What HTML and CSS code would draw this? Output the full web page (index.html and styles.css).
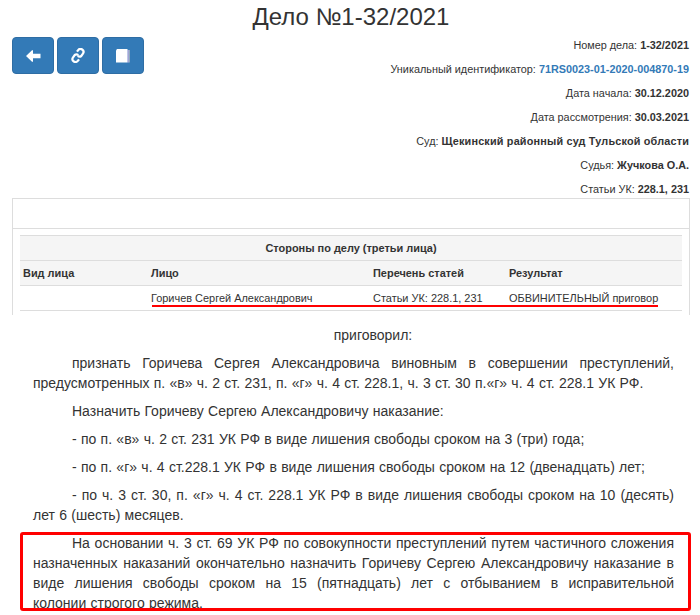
FILE: index.html
```html
<!DOCTYPE html>
<html lang="ru">
<head>
<meta charset="utf-8">
<title>Дело №1-32/2021</title>
<link rel="stylesheet" href="styles.css">
</head>
<body>
<div class="case">
  <h1 class="title">Дело №1-32/2021</h1>
  <div class="head">
    <div class="buttons">
      <a class="btn"><svg width="15" height="12" viewBox="0 0 15 12"><path d="M0 6 6 0.2 7 0.2 7 3.800 14.500 3.800 14.500 8.200 7 8.200 7 11.800 6 11.800Z" fill="#fff"/></svg></a>
      <a class="btn"><svg width="14" height="15" viewBox="0 0 14 15" fill="none" stroke="#fff" stroke-width="2.200"><g transform="rotate(35 7 7.500)"><path d="M4 5V3.200a3 3 0 0 1 6 0V6a3 3 0 0 1-3 2"/><path d="M10 10v1.800a3 3 0 0 1-6 0V9a3 3 0 0 1 3-2"/></g></svg></a>
      <a class="btn"><svg width="14" height="14" viewBox="0 0 14 14"><path d="M12.500 1h1v12.500h-1Z" fill="#e8d8c8"/><path d="M11.500 1h1v12.500h-1Z" fill="#b9a0e8"/><path d="M0 1.500 1 0H11.500V13.500H0Z" fill="#fff"/></svg></a>
    </div>
    <div class="meta">
      <div class="meta-line">Номер дела: <b>1-32/2021</b></div>
      <div class="meta-line">Уникальный идентификатор: <a class="uid">71RS0023-01-2020-004870-19</a></div>
      <div class="meta-line">Дата начала: <b>30.12.2020</b></div>
      <div class="meta-line">Дата рассмотрения: <b>30.03.2021</b></div>
      <div class="meta-line">Суд: <b class="court">Щекинский районный суд Тульской области</b></div>
      <div class="meta-line">Судья: <b>Жучкова О.А.</b></div>
      <div class="meta-line">Статьи УК: <b>228.1, 231</b></div>
    </div>
  </div>
  <div class="panel">
    <div class="panel-head"></div>
    <div class="panel-body">
      <table class="parties">
        <colgroup><col class="c1"><col class="c2"><col class="c3"><col class="c4"></colgroup>
        <thead>
          <tr><th class="caption" colspan="4">Стороны по делу (третьи лица)</th></tr>
          <tr><th>Вид лица</th><th>Лицо</th><th>Перечень статей</th><th>Результат</th></tr>
        </thead>
        <tbody>
          <tr><td></td><td>Горичев Сергей Александрович</td><td>Статьи УК: 228.1, 231</td><td>ОБВИНИТЕЛЬНЫЙ приговор</td></tr>
        </tbody>
      </table>
      <div class="underline"></div>
    </div>
  </div>
</div>
<div class="verdict">
  <p class="center">приговорил:</p>
  <p>признать Горичева Сергея Александровича виновным в совершении преступлений, предусмотренных п. «в» ч. 2 ст. 231, п. «г» ч. 4 ст. 228.1, ч. 3 ст. 30 п.«г» ч. 4 ст. 228.1 УК РФ.</p>
  <p>Назначить Горичеву Сергею Александровичу наказание:</p>
  <p>- по п. «в» ч. 2 ст. 231 УК РФ в виде лишения свободы сроком на 3 (три) года;</p>
  <p>- по п. «г» ч. 4 ст.228.1 УК РФ в виде лишения свободы сроком на 12 (двенадцать) лет;</p>
  <p>- по ч. 3 ст. 30, п. «г» ч. 4 ст. 228.1 УК РФ в виде лишения свободы сроком на 10 (десять) лет 6 (шесть) месяцев.</p>
  <div class="boxed">
    <p>На основании ч. 3 ст. 69 УК РФ по совокупности преступлений путем частичного сложения назначенных наказаний окончательно назначить Горичеву Сергею Александровичу наказание в виде лишения свободы сроком на 15 (пятнадцать) лет с отбыванием в исправительной колонии&nbsp;строгого&nbsp;режима.</p>
    <div class="redbox"></div>
  </div>
</div>
</body>
</html>
```
FILE: styles.css
```css
html, body { margin: 0; padding: 0; background: #fff; }
body { font-family: "Liberation Sans", Arial, sans-serif; color: #333; height: 615px; overflow: hidden; }
.case { padding: 0 10px 0 12px; height: 315px; overflow: hidden; }
.title { margin: 0; height: 37px; font-size: 24px; font-weight: 400; line-height: 33px; text-align: center; color: #333; }
.head { display: flex; justify-content: space-between; }
.buttons { display: flex; gap: 3px; }
.btn { display: flex; width: 42px; height: 37px; box-sizing: border-box; align-items: center; justify-content: center; background: #337ab7; border: 1px solid #2e6da4; border-radius: 4px; }
.meta { font-size: 10.85px; text-align: right; margin-right: 1px; }
.meta-line { height: 24px; line-height: 16px; }
.uid { color: #337ab7; font-weight: 700; }
.court { letter-spacing: 0.18px; }
.panel { margin-top: -7px; border: 1px solid #ddd; border-bottom: 0; height: 200px; box-sizing: border-box; }
.panel-head { height: 29px; border-bottom: 1px solid #ddd; }
.panel-body { padding: 6px 7px 0; position: relative; }
.parties { width: 100%; border-collapse: collapse; table-layout: fixed; font-size: 10.95px; border-top: 1px solid #ddd; }
.parties th { background: #f5f5f5; font-weight: 700; text-align: left; height: 24px; padding: 0 3px; border-bottom: 1px solid #ddd; }
.parties td { height: 24px; padding: 0 3px; border-bottom: 1px solid #ddd; }
.parties .caption { text-align: center; }
.c1 { width: 128px; }
.c2 { width: 222px; }
.c3 { width: 136px; }
.underline { position: absolute; left: 139px; top: 76px; width: 506px; height: 2px; background: #f00; }
.verdict { padding: 10px 26px 0 33px; font-size: 14px; word-spacing: 0.4px; line-height: 20px; color: #333; }
.verdict p { margin: 0 0 8px; text-indent: 39px; text-align: justify; }
.boxed { position: relative; }
.verdict .center { text-align: center; }
.redbox { position: absolute; left: -13px; top: -1px; width: 665px; height: 73px; border: 3px solid #f00; border-radius: 3px; }
```
